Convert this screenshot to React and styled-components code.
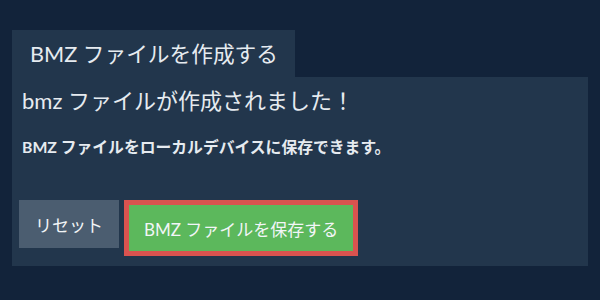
import React from "react";
import styled, { createGlobalStyle } from "styled-components";

const Global = createGlobalStyle`
  html, body { margin: 0; padding: 0; background: #12233a; }
  body { font-family: Lato, "Noto Sans CJK JP", sans-serif; color: #e6ebf0; }
`;

const Page = styled.div`
  width: 600px;
  height: 300px;
  box-sizing: border-box;
  padding: 30px 12px 0 12px;
  display: flex;
  flex-direction: column;
`;

const Tabs = styled.div`
  display: flex;
`;

const Tab = styled.div`
  background: #22364c;
  height: 47px;
  width: 283px;
  box-sizing: border-box;
  padding: 0 0 3px 18px;
  display: flex;
  align-items: center;
  font-size: 21.7px;
  color: #e6ebf0;
`;

const Panel = styled.div`
  background: #22364c;
  height: 189px;
  box-sizing: border-box;
  padding: 9px 7px 0 7px;
  display: flex;
  flex-direction: column;
`;

const Title = styled.h2`
  margin: 0 0 0 3px;
  font-size: 22px;
  font-weight: 400;
  line-height: 30px;
`;

const Sub = styled.p`
  margin: 21px 0 0 3px;
  font-size: 15.8px;
  font-weight: 700;
  line-height: 20px;
`;

const Actions = styled.div`
  display: flex;
  align-items: flex-start;
  gap: 5px;
  margin-top: 43px;
`;

const Button = styled.button`
  font-family: inherit;
  font-size: 17px;
  color: #f2f5f7;
  border: ${(p) => (p.$focus ? "5px solid #d9534f" : "none")};
  background: ${(p) => (p.$primary ? "#5cb85c" : "#4b5d70")};
  height: ${(p) => (p.$focus ? "56px" : "48px")};
  padding: 0 ${(p) => (p.$focus ? "15px" : "16px")};
  display: flex;
  align-items: center;
  cursor: pointer;
  box-sizing: border-box;
`;

export default function App() {
  return (
    <>
      <Global />
      <Page>
        <Tabs>
          <Tab>BMZ ファイルを作成する</Tab>
        </Tabs>
        <Panel>
          <Title>bmz ファイルが作成されました！</Title>
          <Sub>BMZ ファイルをローカルデバイスに保存できます。</Sub>
          <Actions>
            <Button>リセット</Button>
            <Button $primary $focus>BMZ ファイルを保存する</Button>
          </Actions>
        </Panel>
      </Page>
    </>
  );
}
